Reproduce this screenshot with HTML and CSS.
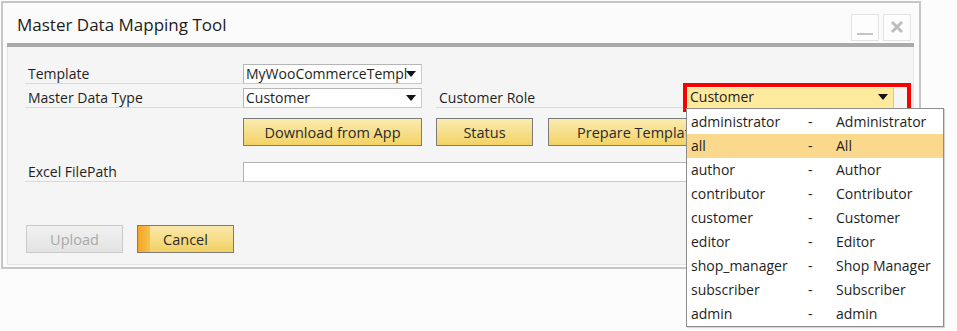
FILE: index.html
```html
<!DOCTYPE html>
<html lang="en">
<head>
    <meta charset="UTF-8">
    <title>Master Data Mapping Tool</title>
    <link rel="stylesheet" href="styles.css">
</head>
<body>
    <div class="window">
        <div class="titlebar">
            <span class="title">Master Data Mapping Tool</span>
            <div class="controls">
                <span class="ctl"><span class="min-glyph"></span></span>
                <span class="ctl">
                    <svg width="14" height="14" viewBox="0 0 14 14"><path d="M2 2 L12 12 M12 2 L2 12" stroke="#bdbdbd" stroke-width="3" fill="none"/></svg>
                </span>
            </div>
        </div>
        <div class="titlerule"></div>
        <div class="panel">
            <div class="row">
                <label class="lbl">Template</label>
                <div class="select"><span class="val">MyWooCommerceTemplate</span><span class="arrow"></span></div>
            </div>
            <div class="row">
                <label class="lbl">Master Data Type</label>
                <div class="select"><span class="val">Customer</span><span class="arrow"></span></div>
                <label class="lbl lbl-role">Customer Role</label>
                <div class="combo-wrap">
                    <div class="combo"><span class="val">Customer</span><span class="arrow"></span></div>
                    <div class="mark"></div>
                    <ul class="popup">
                        <li><span>administrator</span><span>-</span><span>Administrator</span></li>
                        <li class="active"><span>all</span><span>-</span><span>All</span></li>
                        <li><span>author</span><span>-</span><span>Author</span></li>
                        <li><span>contributor</span><span>-</span><span>Contributor</span></li>
                        <li><span>customer</span><span>-</span><span>Customer</span></li>
                        <li><span>editor</span><span>-</span><span>Editor</span></li>
                        <li><span>shop_manager</span><span>-</span><span>Shop Manager</span></li>
                        <li><span>subscriber</span><span>-</span><span>Subscriber</span></li>
                        <li><span>admin</span><span>-</span><span>admin</span></li>
                    </ul>
                </div>
            </div>
            <div class="row row-buttons">
                <button class="btn btn-wide">Download from App</button>
                <button class="btn btn-status">Status</button>
                <button class="btn btn-wide">Prepare Template</button>
            </div>
            <div class="row row-path">
                <label class="lbl">Excel FilePath</label>
                <div class="input"></div>
            </div>
            <div class="actions">
                <button class="btn btn-action disabled">Upload</button>
                <button class="btn btn-action cancel">Cancel</button>
            </div>
        </div>
    </div>
</body>
</html>
```

FILE: styles.css
```css
* { margin: 0; padding: 0; box-sizing: border-box; }
body {
    font-family: "Open Sans", "Noto Sans", sans-serif;
    font-size: 14px;
    color: #1e1e1e;
    background: #fcfcfc;
    width: 957px;
    height: 331px;
    overflow: hidden;
}
.window {
    margin: 1px 0 0 1px;
    width: 920px;
    height: 268px;
    border: 2px solid #c6c6c6;
    background: #fbfbfb;
    padding: 0 5px 5px 4px;
}
.titlebar {
    height: 38px;
    display: flex;
    align-items: center;
    justify-content: space-between;
}
.title {
    font-size: 17px;
    margin-left: 10px;
    margin-top: 4px;
    color: #1b1b1b;
}
.controls {
    display: flex;
    gap: 4px;
    margin-right: 3px;
    margin-top: 10px;
}
.ctl {
    width: 28px;
    height: 27px;
    border: 1px solid #e2e2e2;
    background: #fdfdfd;
    display: flex;
    align-items: center;
    justify-content: center;
}
.min-glyph {
    width: 16px;
    height: 2px;
    background: #c4c4c4;
    margin-top: 14px;
}
.titlerule {
    height: 4px;
    background: #a9a9a9;
    margin-top: 2px;
}
.panel {
    height: 218px;
    background: #f5f5f5;
    border: 1px solid #e6e6e6;
    border-top: none;
    padding: 17px 0 0 17px;
}
.row {
    display: flex;
    align-items: stretch;
    height: 20px;
    margin-bottom: 4px;
}
.lbl {
    width: 218px;
    padding-left: 3px;
    line-height: 19px;
    border-bottom: 1px solid #d5dbe1;
}
.lbl-role {
    width: 250px;
    margin-left: 14px;
}
.select, .combo, .input {
    position: relative;
    height: 20px;
    background: #fff;
    border: 1px solid #c9c9c9;
    border-top-color: #b5b5b5;
    border-left-color: #b5b5b5;
}
.select { width: 179px; }
.val {
    display: block;
    line-height: 18px;
    padding-left: 2px;
    padding-right: 14px;
    white-space: nowrap;
    overflow: hidden;
}
.select .val { width: 164px; padding-right: 0; }
.arrow {
    position: absolute;
    right: 5px;
    top: 6px;
    width: 0;
    height: 0;
    border-left: 5px solid transparent;
    border-right: 5px solid transparent;
    border-top: 6px solid #141414;
}
.combo-wrap {
    position: relative;
    margin-left: 2px;
}
.combo {
    width: 206px;
    background: #fdea9c;
    border: none;
    border-right: 1px solid #d8c98e;
}
.combo .val { padding-left: 2px; }
.mark {
    position: absolute;
    left: -5px;
    top: -5px;
    width: 228px;
    height: 29px;
    border: 4px solid #fb0000;
}
.popup {
    position: absolute;
    left: -2px;
    top: 20px;
    width: 258px;
    list-style: none;
    background: #fff;
    border: 1px solid #8d8d8d;
    padding-top: 1px;
    box-shadow: 1px 1px 1px rgba(0,0,0,0.15);
    z-index: 2;
}
.popup li {
    display: grid;
    grid-template-columns: 117px 28px 1fr;
    height: 24px;
    line-height: 24px;
    padding-left: 4px;
    font-size: 14px;
}
.popup li.active { background: #fbd98c; }
.row-buttons {
    height: 28px;
    margin-top: 10px;
    margin-bottom: 16px;
    padding-left: 218px;
    gap: 14px;
}
.btn {
    font-family: inherit;
    font-size: 14.5px;
    color: #2a2a2a;
    height: 28px;
    border: 1px solid #7b7b7b;
    background: linear-gradient(#faebb0, #f3d266);
    white-space: nowrap;
    overflow: hidden;
}
.btn-wide { width: 179px; }
.btn-status { width: 97px; margin-right: 1px; }
.input { width: 650px; }
.actions {
    display: flex;
    gap: 14px;
    margin-top: 43px;
    padding-left: 1px;
}
.btn-action {
    width: 97px;
    height: 28px;
}
.disabled {
    color: #a9a9a9;
    border-color: #c9c9c9;
    background: linear-gradient(#f1f1f1, #e3e3e3);
}
.cancel {
    background: linear-gradient(90deg, #f3a428 0, #f6c24a 12px, transparent 12px), linear-gradient(#fae9ac, #f2d062);
}
```
